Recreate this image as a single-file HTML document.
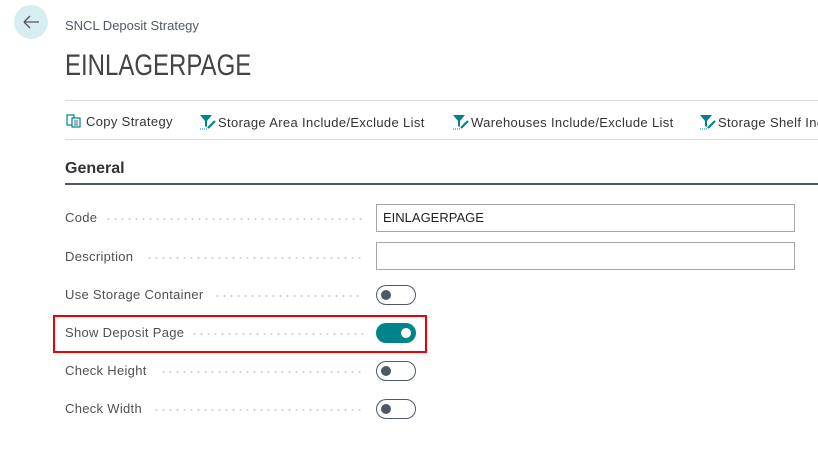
<!DOCTYPE html>
<html><head><meta charset="utf-8"><style>
body{margin:0;width:818px;height:458px;background:#fff;font-family:"Liberation Sans",sans-serif;position:relative;overflow:hidden;color:#333}
.a{position:absolute}
.back{left:14px;top:5px;width:34px;height:34px;border-radius:50%;background:#d7eef0}
.lbl{left:65px;font-size:13px;color:#505050;white-space:nowrap;letter-spacing:0.3px}
.dots{position:absolute;height:2px;background:radial-gradient(circle,#cfcfcf 0.9px,transparent 1.2px) 0 0/7px 2px repeat-x}
.inp{left:376px;border:1px solid #a6a6a6;font-size:13px;line-height:26px;padding-left:6px;box-sizing:border-box;width:419px;height:28px;color:#222}
.tg{left:376px;width:40px;height:20px;border:1px solid #505867;border-radius:11px;box-sizing:border-box}
.tg i{position:absolute;left:4px;top:4px;width:10px;height:10px;border-radius:50%;background:#505867}
.tg.on{background:#00838a;border-color:#00838a}
.tg.on i{left:auto;right:4px;background:#fff}
.act{top:114px;font-size:13px;color:#333;white-space:nowrap;letter-spacing:0.35px}
.clip{position:absolute;left:0;top:0;width:818px;height:458px;overflow:hidden}
</style></head><body><div class="clip">
<div class="a back"><svg width="34" height="34"><path d="M10 17h15M10 17l6-6M10 17l6 6" stroke="#555" stroke-width="1.3" fill="none"/></svg></div>
<div class="a" style="left:65px;top:18px;font-size:13px;color:#505867">SNCL Deposit Strategy</div>
<div class="a" style="left:65px;top:49px;font-size:30px;color:#444;transform:scaleX(0.8);transform-origin:0 0;white-space:nowrap">EINLAGERPAGE</div>
<div class="a" style="left:65px;top:100px;width:753px;height:1px;background:#d8d8d8"></div>
<div class="a" style="left:65px;top:139px;width:753px;height:1px;background:#d8d8d8"></div>
<div class="a act" style="left:66px"><svg width="16" height="14" style="vertical-align:-2px"><rect x="1" y="1" width="7" height="10" fill="none" stroke="#00838a" stroke-width="1.2"/><rect x="6" y="4" width="8" height="9" fill="#fff" stroke="#00838a" stroke-width="1.2"/><path d="M8 7h4M8 9h4M8 11h4" stroke="#00838a"/></svg> Copy Strategy</div>
<div class="a act" style="left:199px"><svg width="19" height="16" style="vertical-align:-3px"><path d="M1 1h12l-5 6v6l-2-1V7z" fill="#00838a"/><path d="M9 14l7-7" stroke="#00838a" stroke-width="2.2"/><path d="M1 15h7" stroke="#00838a" stroke-dasharray="1 1"/></svg>Storage Area Include/Exclude List</div>
<div class="a act" style="left:452px"><svg width="19" height="16" style="vertical-align:-3px"><path d="M1 1h12l-5 6v6l-2-1V7z" fill="#00838a"/><path d="M9 14l7-7" stroke="#00838a" stroke-width="2.2"/><path d="M1 15h7" stroke="#00838a" stroke-dasharray="1 1"/></svg>Warehouses Include/Exclude List</div>
<div class="a act" style="left:699px"><svg width="19" height="16" style="vertical-align:-3px"><path d="M1 1h12l-5 6v6l-2-1V7z" fill="#00838a"/><path d="M9 14l7-7" stroke="#00838a" stroke-width="2.2"/><path d="M1 15h7" stroke="#00838a" stroke-dasharray="1 1"/></svg>Storage Shelf Inc</div>
<div class="a" style="left:65px;top:160px;font-size:16px;font-weight:bold;color:#333">General</div>
<div class="a" style="left:65px;top:183px;width:753px;height:2px;background:#505867"></div>

<div class="a lbl" style="top:210px">Code</div><div class="dots" style="left:105px;width:258px;top:218px"></div>
<div class="a inp" style="top:204px">EINLAGERPAGE</div>
<div class="a lbl" style="top:249px">Description</div><div class="dots" style="left:146px;width:217px;top:257px"></div>
<div class="a inp" style="top:242px"></div>
<div class="a lbl" style="top:287px">Use Storage Container</div><div class="dots" style="left:214px;width:149px;top:295px"></div>
<div class="a tg" style="top:285px"><i></i></div>
<div class="a lbl" style="top:325px">Show Deposit Page</div><div class="dots" style="left:191px;width:172px;top:333px"></div>
<div class="a tg on" style="top:323px"><i></i></div>
<div class="a" style="left:53px;top:315px;width:374px;height:38px;border:2px solid #e00;box-sizing:border-box"></div>
<div class="a lbl" style="top:363px">Check Height</div><div class="dots" style="left:160px;width:203px;top:371px"></div>
<div class="a tg" style="top:361px"><i></i></div>
<div class="a lbl" style="top:401px">Check Width</div><div class="dots" style="left:153px;width:210px;top:409px"></div>
<div class="a tg" style="top:399px"><i></i></div>
</div></body></html>
